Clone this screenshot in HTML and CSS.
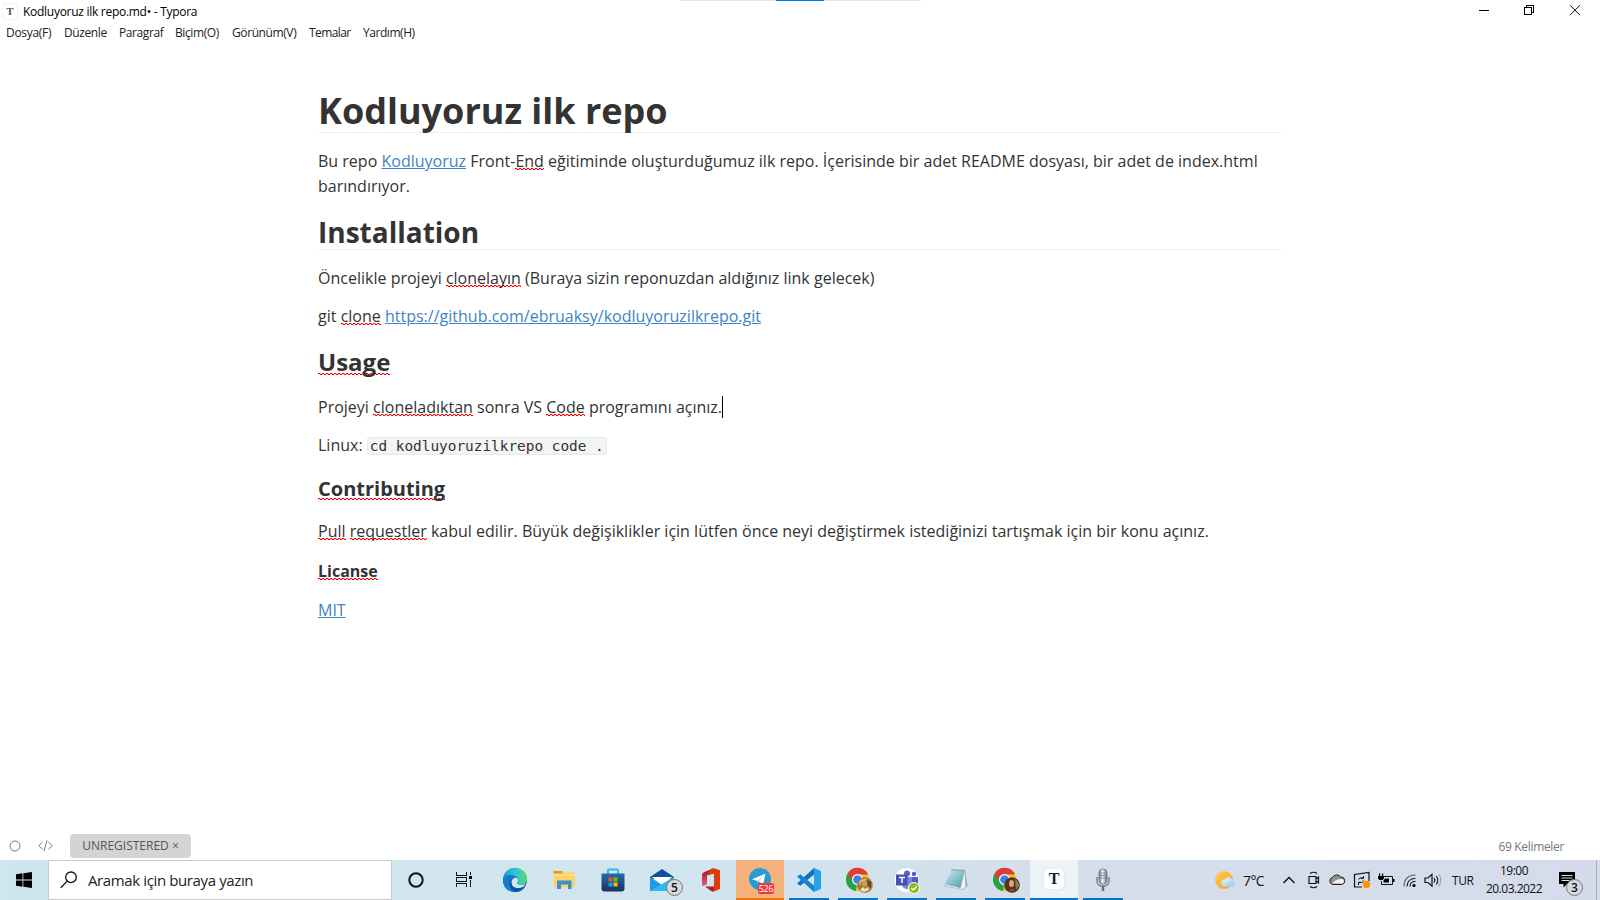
FILE: index.html
```html
<!DOCTYPE html>
<html lang="tr">
<head>
<meta charset="utf-8">
<title>Kodluyoruz ilk repo.md• - Typora</title>
<link rel="stylesheet" href="styles.css">
</head>
<body>
<div class="screen">
  <div class="drag-strip"><i></i></div>
  <header class="titlebar">
    <span class="app-icon">T</span>
    <span class="title">Kodluyoruz ilk repo.md• - Typora</span>
    <div class="win-buttons">
      <svg width="46" height="20" viewBox="0 0 46 20" shape-rendering="crispEdges"><path d="M18 10.5h10" stroke="#000"/></svg>
      <svg width="46" height="20" viewBox="0 0 46 20" shape-rendering="crispEdges"><path d="M17.500 7.500h7v7h-7zM19.500 7V5.500h7v7H25" fill="none" stroke="#000"/></svg>
      <svg width="46" height="20" viewBox="0 0 46 20"><path d="M17 5.200l10 10M27 5.200l-10 10" fill="none" stroke="#000"/></svg>
    </div>
  </header>
  <nav class="menubar">
    <span class="m1">Dosya(F)</span><span class="m2">Düzenle</span><span class="m3">Paragraf</span><span class="m4">Biçim(O)</span><span class="m5">Görünüm(V)</span><span class="m6">Temalar</span><span class="m7">Yardım(H)</span>
  </nav>
  <main class="editor">
    <article class="doc">
      <h1>Kodluyoruz ilk repo</h1>
      <p>Bu repo <a>Kodluyoruz</a> Front-<span class="sp">End</span> eğitiminde oluşturduğumuz ilk repo. İçerisinde bir adet README dosyası, bir adet de index.html barındırıyor.</p>
      <h2>Installation</h2>
      <p>Öncelikle projeyi <span class="sp">clonelayın</span> (Buraya sizin reponuzdan aldığınız link gelecek)</p>
      <p>git <span class="sp">clone</span> <a>https://github.com/ebruaksy/kodluyoruzilkrepo.git</a></p>
      <h3><span class="sp">Usage</span></h3>
      <p>Projeyi <span class="sp">cloneladıktan</span> sonra VS <span class="sp">Code</span> programını açınız.<span class="caret"></span></p>
      <p>Linux: <code>cd kodluyoruzilkrepo code .</code></p>
      <h4><span class="sp">Contributing</span></h4>
      <p><span class="sp">Pull</span> <span class="sp">requestler</span> kabul edilir. Büyük değişiklikler için lütfen önce neyi değiştirmek istediğinizi tartışmak için bir konu açınız.</p>
      <h5><span class="sp">Licanse</span></h5>
      <p><a>MIT</a></p>
    </article>
  </main>
  <footer class="status">
    <svg class="st-ring" width="12" height="12" viewBox="0 0 12 12"><circle cx="6" cy="6" r="5" fill="none" stroke="#777"/></svg>
    <svg class="st-code" width="15" height="12" viewBox="0 0 15 12"><path d="M4.500 2L.8 5.700l3.700 3.600M10.500 2l3.700 3.700-3.700 3.600M9 .5L6 11" fill="none" stroke="#777"/></svg>
    <span class="unreg">UNREGISTERED <b>×</b></span>
    <span class="words">69 Kelimeler</span>
  </footer>
  <div class="taskbar">
    <div class="start"><svg width="16" height="16" viewBox="0 0 16 16"><path d="M0 2.200L6.500 1.300V7.500H0zM7.300 1.200L16 0v7.500H7.300zM0 8.400h6.500v6.300L0 13.800zM7.300 8.400H16V16l-8.700-1.200z"/></svg></div>
    <div class="search">
      <svg width="18" height="18" viewBox="0 0 18 18"><circle cx="11" cy="6.300" r="5.300" fill="none" stroke="#111" stroke-width="1.300"/><path d="M7.200 10.100L.8 16.800" stroke="#111" stroke-width="1.300"/></svg>
      <span>Aramak için buraya yazın</span>
    </div>
    <div class="tile"><svg width="18" height="18" viewBox="0 0 18 18"><circle cx="9" cy="9" r="6.700" fill="none" stroke="#111" stroke-width="2"/></svg></div>
    <div class="tile tv"><svg width="18" height="18" viewBox="0 0 18 18" shape-rendering="crispEdges"><path d="M1.500 1v3.500h10V1M1.500 16v-3.500h10V16M1.500 6.500h10v4h-10zM15.500 1v3M15.500 9v7" fill="none" stroke="#111"/><path d="M14 5h3v3h-3z"/></svg></div>
    <div class="apps">
      <div class="tile"><svg width="26" height="26" viewBox="0 0 26 26">
        <defs><linearGradient id="e1" x1="0" y1=".3" x2="1" y2=".2"><stop offset="0" stop-color="#1b9de2"/><stop offset=".5" stop-color="#2fc3d8"/><stop offset="1" stop-color="#5fdd5a"/></linearGradient><linearGradient id="e2" x1="0" y1="0" x2="0" y2="1"><stop offset="0" stop-color="#1792dc"/><stop offset="1" stop-color="#0b4f9e"/></linearGradient></defs>
        <circle cx="13" cy="13" r="12" fill="url(#e2)"/>
        <path d="M1.200 11.500C2 5.300 7 1 13 1c7 0 12 5 12 10.800 0 4-3 6.200-6.300 6.200-2.600 0-4.100-.8-3.500-1.700 1.200-1.400 1.500-3 .6-4.700C14.700 9.300 12 8 9 8c-3.500 0-6.300 1.400-7.800 3.500z" fill="url(#e1)"/>
        <path d="M9.300 8c-4.500 4.500-2.800 13 3.200 16.800C5 25 .8 19 1 13 1.400 10 5 7.800 9.300 8z" fill="#157dcc"/>
        <path d="M9.500 16c0-3 2-5.200 4-5.200 2.500 0 3.500 2.800 1.700 5.300-.8 1.200.9 1.900 3.500 1.900 1.800 0 3.200-.5 4.700-1.500-.2 1.700-2.800 4.500-6.800 4.500-4 0-7-2-7.100-5z" fill="#d3e6ee"/>
        <path d="M9.500 14c-1 5 3 8.600 7.500 8.600 2.600 0 4.500-1 6-2.500-2 3-5.500 5-9.500 4.900C8 22.500 7 17.500 9.500 14z" fill="#0d55a5"/></svg></div>
      <div class="tile"><svg width="22" height="20" viewBox="0 0 22 20"><path d="M.5 1h8.500l1.500 1.500H21.500v15H.5z" fill="#fcd364"/><path d="M.5 1h9v2.500h-9z" fill="#d69e17"/><path d="M.5 4h21v2h-21z" fill="#ffdf80"/><path d="M4 10.500h14.500V19h-3.500v-4.500H8V19H4z" fill="#3d8fd1"/></svg></div>
      <div class="tile"><svg width="24" height="24" viewBox="0 0 24 24"><defs><linearGradient id="s" x1="0" y1="0" x2="0" y2="1"><stop offset="0" stop-color="#226fa8"/><stop offset="1" stop-color="#1c2f5e"/></linearGradient></defs><path d="M7 6V2.500Q7 1.500 8 1.500h8q1 0 1 1V6" fill="none" stroke="#2bb7f0" stroke-width="2"/><path d="M.5 5.500h23v15q0 3-3 3h-17q-3 0-3-3z" fill="url(#s)"/><path d="M7.500 9.500h4v4h-4z" fill="#f25022"/><path d="M12.500 9.500h4v4h-4z" fill="#7fba00"/><path d="M7.500 14.500h4v4h-4z" fill="#00a4ef"/><path d="M12.500 14.500h4v4h-4z" fill="#ffb900"/></svg></div>
      <div class="tile"><svg width="26" height="24" viewBox="0 0 26 24"><path d="M1 9L13 1l12 8v2H1z" fill="#0f4f9c"/><path d="M3 9h20l-10 8z" fill="#fff"/><path d="M1 9l12 8 12-8v14H1z" fill="#1d9be6"/><path d="M3 9h20l-10 7z" fill="#fff"/><path d="M1 23L25 9v14z" fill="#33b5ef"/></svg><span class="badge">5</span></div>
      <div class="tile"><svg width="20" height="24" viewBox="0 0 20 24"><defs><linearGradient id="o" x1="0" y1="0" x2="0" y2="1"><stop offset="0" stop-color="#a00c14"/><stop offset="1" stop-color="#e85a7a"/></linearGradient></defs><path d="M12 .5L3 4.200Q1 5 1 7v9.500q0 1.500 1.500 1.500L6 16V7.500l7-2z" fill="url(#o)"/><path d="M10 .8L13 .3l6 2V21l-6 2.500V5.500L6 7z" fill="#e03c0a"/><path d="M4 18.500h9v5h-2z" fill="#c21520"/></svg></div>
      <div class="tile tele"><svg width="24" height="24" viewBox="0 0 24 24"><circle cx="12" cy="12" r="11" fill="#259cd5"/><path d="M4 12.200L17.500 6.500 15 17.500l-4-3z" fill="#fff"/><path d="M9 13.700l6-4.500-4.500 5.300-.5 2.800z" fill="#b5d6e8"/></svg><span class="count">526</span></div>
      <div class="tile run"><svg width="26" height="26" viewBox="0 0 26 26"><path d="M18 1v6.500L4.300 18.800 1 16.500z" fill="#0c72b9"/><path d="M18 25v-6.500L4.300 7.200 1 9.500z" fill="#1486ce"/><path d="M18 1l7 3v18l-7 3z" fill="#25a2ec"/></svg></div>
      <div class="tile run"><svg width="26" height="26" viewBox="0 0 26 26"><circle cx="12.500" cy="12.500" r="11.500" fill="#fbc116"/><path d="M12.500 12.500L2.500 6.800A11.500 11.500 0 0 0 11 24z" fill="#25a04b"/><path d="M2.500 6.800A11.500 11.500 0 0 1 23 7.500H12.500L8 15z" fill="#dc3f35"/><circle cx="12.500" cy="12.500" r="5.500" fill="#fff"/><circle cx="12.500" cy="12.500" r="4.300" fill="#3b82ea"/></svg>
        <svg class="avatar" width="16" height="16" viewBox="0 0 16 16"><circle cx="8" cy="8" r="7.800" fill="#a67a3c"/><path d="M2 5q3-4 8-3l-2 2-4 1-1 4z" fill="#e0bd79"/><circle cx="7.500" cy="6.500" r="2.700" fill="#c99a6c"/><path d="M3 13l3-3 2 2 3-2 1 3-5 2z" fill="#f1dfbd"/><path d="M10 3l4 2v6l-3-2z" fill="#65451f"/></svg></div>
      <div class="tile run"><svg width="26" height="26" viewBox="0 0 26 26"><circle cx="12.500" cy="13" r="12" fill="#fff"/><circle cx="13" cy="6.500" r="3" fill="#5b61c9"/><circle cx="20" cy="7" r="2.200" fill="#5059c9"/><path d="M15 10h9v6q-1 4-5 4h-4z" fill="#5059c9"/><path d="M9 10h9v7q-1 5-5 5t-5-4z" fill="#7b83eb"/><path d="M2 7.500h11.500v11H2z" fill="#464eb8"/><path d="M5 10.500h6M8 10.500V16" stroke="#fff" stroke-width="1.500"/></svg>
        <svg class="okay" width="12" height="12" viewBox="0 0 12 12"><circle cx="6" cy="6" r="5.500" fill="#8bbd18" stroke="#fff"/><path d="M3.300 6l2 2 3.500-3.800" fill="none" stroke="#fff" stroke-width="1.300"/></svg></div>
      <div class="tile run"><svg width="26" height="24" viewBox="0 0 26 24"><defs><linearGradient id="n" x1="0" y1="0" x2="1" y2="1"><stop offset="0" stop-color="#c4eaf0"/><stop offset="1" stop-color="#5199aa"/></linearGradient></defs><path d="M22 3l2.500 15-5 4z" fill="#8f979b"/><path d="M1.500 18L20 21.500l3-3L22 3z" fill="#eff2f2" stroke="#999" stroke-width=".5"/><path d="M8.500 2.500L22 3l-4.500 17L1.500 16.500z" fill="url(#n)"/><path d="M8.500 2L22.500 2.500" stroke="#777" stroke-width="1.500" stroke-dasharray="1 1"/></svg></div>
      <div class="tile run"><svg width="26" height="26" viewBox="0 0 26 26"><circle cx="12.500" cy="12.500" r="11.500" fill="#fbc116"/><path d="M12.500 12.500L2.500 6.800A11.500 11.500 0 0 0 11 24z" fill="#25a04b"/><path d="M2.500 6.800A11.500 11.500 0 0 1 23 7.500H12.500L8 15z" fill="#dc3f35"/><circle cx="12.500" cy="12.500" r="5.500" fill="#fff"/><circle cx="12.500" cy="12.500" r="4.300" fill="#3b82ea"/></svg>
        <svg class="avatar" width="16" height="16" viewBox="0 0 16 16"><circle cx="8" cy="8" r="7.800" fill="#56351f"/><path d="M11 2q4 3 4 7l-3 4z" fill="#7c8652"/><ellipse cx="7.500" cy="6.500" rx="2.500" ry="3.500" fill="#dfa58b"/><path d="M5 14q2-3 6-2-2 3-6 2z" fill="#c3303d"/></svg></div>
      <div class="tile active"><span class="ty">T</span></div>
      <div class="tile run"><svg width="16" height="24" viewBox="0 0 16 24"><defs><linearGradient id="mc"><stop offset="0" stop-color="#777c86"/><stop offset=".45" stop-color="#f5f6f8"/><stop offset="1" stop-color="#666b76"/></linearGradient></defs><path d="M2 9v3.500Q2 18 8 18t6-5.500V9" fill="none" stroke="#8b8f9a" stroke-width="1.800"/><rect x="4" y="1" width="8" height="15" rx="4" fill="url(#mc)" stroke="#696d78" stroke-width=".8"/><path d="M4 5h8M4 7.500h8M4 10h8" stroke="#777b86" stroke-width=".8"/><path d="M8 18v5" stroke="#6d717c" stroke-width="2.500"/></svg></div>
    </div>
    <div class="tray">
      <svg class="sun" width="22" height="22" viewBox="0 0 22 22"><defs><linearGradient id="su" x1="0" y1="0" x2="1" y2="1"><stop offset="0" stop-color="#ffd451"/><stop offset="1" stop-color="#f6991c"/></linearGradient><linearGradient id="cl" x1="0" y1="0" x2="1" y2="1"><stop offset="0" stop-color="#eef8ff"/><stop offset="1" stop-color="#8cc8f0"/></linearGradient></defs><circle cx="10" cy="11" r="9" fill="url(#su)"/><path d="M11 17.500a3.500 3.500 0 0 1-.3-7 4.300 4.300 0 0 1 7.800.7 3.200 3.200 0 0 1-.5 6.300z" fill="url(#cl)"/></svg>
      <span class="temp">7°C</span>
      <svg class="chev" width="14" height="20" viewBox="0 0 14 20"><path d="M1.500 13L7 7.500l5.500 5.500" fill="none" stroke="#111" stroke-width="1.400"/></svg>
      <div class="icons">
        <svg width="16" height="20" viewBox="0 0 16 20"><path d="M3 6.500h7v7H3zM10 9l2.500-1.800v5.600L10 11M4 3.500q3.500-2.500 7 0M4 16.500q3.500 2.500 7 0" fill="none" stroke="#111" stroke-width="1.200"/></svg>
        <svg width="18" height="20" viewBox="0 0 18 20"><path d="M5 14.500a3.700 3.700 0 0 1-.5-7.200A5 5 0 0 1 12.800 7a3.800 3.800 0 0 1 1 7.500z" fill="#909090" stroke="#222"/><path d="M4 13.500Q8 8.500 14.500 9 17 11 15 13.500z" fill="#f1f1f1"/></svg>
        <svg width="18" height="20" viewBox="0 0 18 20"><path d="M9 17H1.500V4.500L16 2.500v8.500" fill="none" stroke="#111" stroke-width="1.200"/><path d="M5.500 9.500q1-2.500 4.500-1.500M10.500 6v2.500H8M10.500 10.500q-1 3-4.500 2M5.500 15v-2.700h2.300" fill="none" stroke="#111"/><circle cx="13.500" cy="14.500" r="3.700" fill="#ff9500"/></svg>
        <svg width="18" height="20" viewBox="0 0 18 20"><path d="M6.500 6.500h9v8H4.500V11" fill="none" stroke="#111"/><path d="M16 9h1.500v3H16zM8 8.500h4v4H6.500v-2zM1 6h6v2.500L5.500 10h-3L1 8.500zM2 3.500h1.200V6H2zM5 3.500h1.200V6H5z"/></svg>
        <svg width="16" height="20" viewBox="0 0 16 20"><g fill="none" stroke="#555" stroke-width="1.100"><path d="M2 16.500Q2 5.500 13.500 5"/><path d="M5 16.500Q5 9 13.500 8.200" stroke="#222"/><path d="M8 16.500q0-5 5.500-5.300" stroke="#111"/></g><circle cx="12" cy="15.500" r="1.600"/></svg>
        <svg width="18" height="20" viewBox="0 0 18 20"><path d="M1 8h3l4-3.700v11.900L4 12.500H1z" fill="none" stroke="#111" stroke-width="1.200"/><path d="M10 8q1.700 2.200 0 4.500M12.300 6q3 4.200 0 8.500" fill="none" stroke="#111" stroke-width="1.100"/><path d="M14.700 4q4.200 6.200 0 12.500" fill="none" stroke="#999"/></svg>
      </div>
      <span class="lang">TUR</span>
      <div class="clock"><span class="time">19:00</span><span class="date">20.03.2022</span></div>
      <div class="notif"><svg width="16" height="16" viewBox="0 0 16 16"><path d="M0 0h16v12H8l-3.500 3.500V12H0z" fill="#000"/><path d="M2.500 3.500h11M2.500 6h11M2.500 8.500h8" stroke="#d5dcea"/></svg><span class="badge">3</span></div>
      <div class="peek"></div>
    </div>
  </div>
</div>
</body>
</html>
```
FILE: styles.css
```css
* { box-sizing: border-box; }
body { margin: 0; background: #fff; font-family: "Open Sans", "Noto Sans", sans-serif; color: #333; }
svg { display: block; flex: none; }
.screen { width: 1600px; height: 900px; display: flex; flex-direction: column; position: relative; overflow: hidden; }
.drag-strip { position: absolute; top: 0; left: 680px; width: 241px; height: 1px; background: #e5e5e5; }
.drag-strip i { display: block; width: 48px; height: 1px; margin-left: 96px; background: #0078d7; }

.titlebar { height: 22px; display: flex; align-items: center; padding-left: 3px; flex: none; }
.app-icon { width: 14px; height: 15px; border-radius: 3px; box-shadow: 0 0 2px #ccc; font: bold 11px/15px "Liberation Serif", serif; text-align: center; color: #555; }
.title { margin: 2px 0 0 6px; font-size: 12px; line-height: 16px; letter-spacing: -.28px; color: #000; white-space: nowrap; }
.win-buttons { margin-left: auto; display: flex; height: 20px; align-self: flex-start; padding-right: 1px; }
.menubar { height: 22px; display: flex; padding-left: 6px; flex: none; font-size: 12px; line-height: 22px; letter-spacing: -.4px; color: #222; white-space: nowrap; }
.m1 { width: 58px; letter-spacing: -.3px; } .m2 { width: 55px; } .m3 { width: 56px; } .m4 { width: 57px; } .m5 { width: 77px; } .m6 { width: 54px; letter-spacing: -.6px; } .m7 { letter-spacing: -.45px; }

.editor { flex: 1; min-height: 0; }
.doc { width: 964px; margin: 0 auto; padding-top: 44px; font-size: 16px; line-height: 25px; }
.doc h1, .doc h2, .doc h3, .doc h4, .doc h5 { margin: 0; font-weight: 700; }
.doc h1 { font-size: 36px; line-height: 46px; height: 45px; border-bottom: 1px solid #eee; }
.doc h2 { font-size: 28px; line-height: 34px; height: 35px; border-bottom: 1px solid #eee; margin-top: 16px; }
.doc h3 { font-size: 24px; line-height: 34px; margin-top: 16px; }
.doc h4 { font-size: 20px; line-height: 28px; margin-top: 17px; }
.doc h5 { font-size: 16px; line-height: 24px; margin-top: 15px; }
.doc p { margin: 13px 0 0; letter-spacing: .006px; }
.doc h1 + p, .doc h2 + p, .doc h3 + p, .doc h4 + p { margin-top: 16px; }
.doc h5 + p { margin-top: 15px; }
.doc a { color: #4183c4; text-decoration: underline; }
.sp { background: url("data:image/svg+xml,%3Csvg xmlns='http://www.w3.org/2000/svg' width='4' height='2'%3E%3Cpath d='M0 0h2v1H0zM2 1h2v1H2z' fill='%23f00'/%3E%3Cpath d='M0 1h1v1H0zM2 0h1v1H2z' fill='%23f00' opacity='.35'/%3E%3C/svg%3E") left 0 bottom 2px / 4px 2px repeat-x; }
.doc h3 .sp { background-position: left 0 bottom 3px; }
.caret { display: inline-block; width: 1px; height: 22px; background: #000; vertical-align: -5px; margin-right: -1px; }
code { font: 14.4px/1 "DejaVu Sans Mono", monospace; letter-spacing: 0; background: #f3f4f4; border: 1px solid #e7eaed; border-radius: 3px; padding: 0 2px; }

.status { height: 30px; flex: none; display: flex; align-items: center; font-size: 12px; color: #777; padding: 2px 36px 0 9px; }
.st-code { margin-left: 17px; }
.unreg { margin-left: 17px; width: 121px; height: 24px; border-radius: 4px; background: #d4d4d4; color: #555; text-align: center; line-height: 24px; }
.unreg b { font-weight: 400; }
.words { margin-left: auto; letter-spacing: -.33px; }

.taskbar { height: 40px; flex: none; display: flex; background: linear-gradient(90deg, #cfe6ee 0, #d1e5ee 45%, #d4dfea 62%, #d5dbea 100%); color: #111; }
.start { width: 48px; display: grid; place-items: center; }
.search { width: 344px; background: #fff; border: 1px solid #c8cacc; display: flex; align-items: center; padding-left: 11px; font-size: 15px; letter-spacing: -.38px; color: #222; }
.search span { margin-left: 10px; margin-top: -1px; white-space: nowrap; }
.tile { width: 48px; height: 40px; position: relative; display: grid; place-items: center; flex: none; }
.apps { display: flex; gap: 1px; margin-left: 3px; }
.badge { position: absolute; width: 17px; height: 17px; right: 3px; top: 19px; border-radius: 50%; border: 1px solid #777; background: #d4dadf; font-size: 12px; line-height: 15px; text-align: center; font-weight: 600; }
.tele { background: #f6b27d; border-bottom: 2px solid #ff7300; }
.count { position: absolute; left: 22px; top: 23px; width: 16px; height: 11px; border-radius: 2px; background: #ee3a37; color: #fff; font-size: 9px; line-height: 11px; text-align: center; letter-spacing: -.3px; }
.run::after { content: ""; position: absolute; left: 4px; bottom: 0; width: 40px; height: 2px; background: #0078d7; }
.avatar { position: absolute; left: 23px; top: 17px; }
.okay { position: absolute; left: 25px; top: 22px; }
.active { background: #edf2f7; border-bottom: 2px solid #0078d7; }
.ty { width: 20px; height: 20px; border-radius: 4px; background: #fff; box-shadow: 0 0 1px #bbb; font: bold 16px/20px "Liberation Serif", serif; text-align: center; color: #222; }

.tray { margin-left: auto; display: flex; align-items: center; font-size: 12px; }
.sun { margin-right: 7px; }
.temp { width: 39px; font-size: 14px; letter-spacing: -.6px; }
.icons { display: flex; gap: 6.400px; margin-left: 10px; }
.lang { margin-left: 10px; width: 29px; letter-spacing: -.4px; }
.clock { width: 66px; display: flex; flex-direction: column; text-align: center; line-height: 18px; letter-spacing: -.5px; }
.notif { position: relative; width: 49px; height: 40px; padding: 12px 0 0 12px; }
.notif .badge { left: 19px; }
.peek { width: 4px; height: 40px; border-left: 1px solid #a9b0bb; }
```
